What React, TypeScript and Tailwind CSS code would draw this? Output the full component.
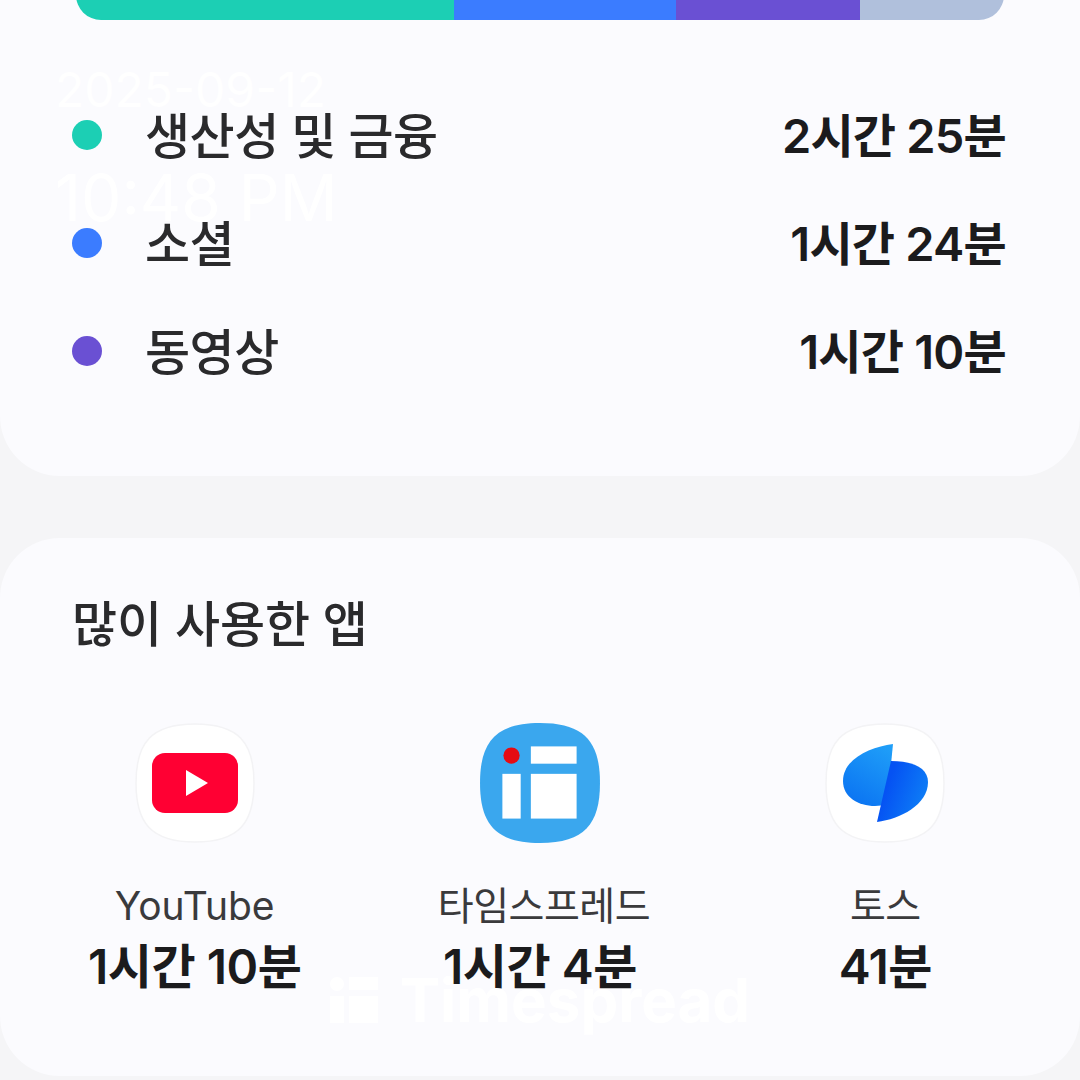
import React from 'react';

const FONT = "font-['Inter','Noto_Sans_CJK_KR',sans-serif]";

const categories = [
    { name: '생산성 및 금융', time: '2시간 25분', dot: 'bg-[#1ccfb4]' },
    { name: '소셜', time: '1시간 24분', dot: 'bg-[#3b7cff]' },
    { name: '동영상', time: '1시간 10분', dot: 'bg-[#6a50d3]' },
];

const squircle = 'M60 1C16 1 1 20 1 60s15 59 59 59 59-19 59-59S104 1 60 1Z';

const YouTubeIcon = () => (
    <svg width="120" height="120" viewBox="0 0 120 120">
        <path d={squircle} fill="#ffffff" stroke="#f3f3f5" strokeWidth="1.5" />
        <rect x="17" y="30" width="86" height="60" rx="13" fill="#ff0033" />
        <path d="M51 47 L73 60 L51 73 Z" fill="#ffffff" />
    </svg>
);

const TimespreadIcon = () => (
    <svg width="122" height="122" viewBox="0 0 120 120">
        <path d={squircle} fill="#3aa7ee" />
        <rect x="51" y="24" width="45" height="17" fill="#ffffff" />
        <rect x="51" y="51" width="45" height="44" fill="#ffffff" />
        <rect x="23" y="51" width="18" height="44" fill="#ffffff" />
        <circle cx="32" cy="33" r="8" fill="#e60b12" />
    </svg>
);

const TossIcon = () => (
    <svg width="120" height="120" viewBox="0 0 120 120">
        <defs>
            <linearGradient id="tossLeft" x1="0.8" y1="0" x2="0.3" y2="1">
                <stop offset="0" stopColor="#1f9ef8" />
                <stop offset="1" stopColor="#0b74f2" />
            </linearGradient>
            <linearGradient id="tossRight" x1="0.2" y1="0.4" x2="0.9" y2="0.7">
                <stop offset="0" stopColor="#0552f3" />
                <stop offset="1" stopColor="#0d7cf6" />
            </linearGradient>
        </defs>
        <path d={squircle} fill="#ffffff" stroke="#f3f3f5" strokeWidth="1.5" />
        <path d="M68 21C45 24 18 36 18 58C18 74 33 83 50 83L62 82Z" fill="url(#tossLeft)" />
        <path d="M52 99C75 96 103 82 103 59C103 46 90 38 66 38Z" fill="url(#tossRight)" />
    </svg>
);

const apps = [
    { name: 'YouTube', time: '1시간 10분', icon: <YouTubeIcon />, nameClass: 'tracking-[0px]' },
    { name: '타임스프레드', time: '1시간 4분', icon: <TimespreadIcon />, nameClass: 'ml-[8px] tracking-[-0.5px]' },
    { name: '토스', time: '41분', icon: <TossIcon />, nameClass: 'tracking-[-0.5px]' },
];

export default function App() {
    return (
        <div className={`relative h-[1080px] w-[1080px] overflow-hidden bg-[#f5f5f7] ${FONT}`}>
            {/* Category card, cut off by the top of the screen */}
            <section className="flow-root h-[476px] rounded-b-[60px] bg-[#fbfbfe] px-[76px]">
                <div className="-mt-[30px] flex h-[50px] overflow-hidden rounded-[34px]">
                    <div className="w-[378px] bg-[#1ccfb4]"></div>
                    <div className="w-[222px] bg-[#3b7cff]"></div>
                    <div className="w-[184px] bg-[#6a50d3]"></div>
                    <div className="w-[144px] bg-[#b0c0dc]"></div>
                </div>

                <div className="-mx-1 mt-[61px] flex flex-col">
                    {categories.map((row) => (
                        <div key={row.name} className="flex h-[108px] items-center pr-[2px]">
                            <span className={`h-[30px] w-[30px] rounded-full ${row.dot}`}></span>
                            <span className="ml-[43px] pt-[3px] text-[49px] font-medium tracking-[-0.5px] text-[#2a2a2c]">
                                {row.name}
                            </span>
                            <span className="ml-auto pt-[2px] text-[47px] font-semibold tracking-[-0.8px] text-[#1b1b1d]">
                                {row.time}
                            </span>
                        </div>
                    ))}
                </div>
            </section>

            {/* Most used apps */}
            <section className="mt-[62px] h-[538px] rounded-[60px] bg-[#fbfbfe]">
                <h2 className="pl-[72px] pt-[56px] text-[49px] font-medium leading-[62px] tracking-[-0.1px] text-[#2a2a2c]">
                    많이 사용한 앱
                </h2>
                <div className="mt-[67px] grid grid-cols-3 px-[22px]">
                    {apps.map((app) => (
                        <div key={app.name} className="flex flex-col items-center">
                            <div className="flex h-[120px] items-center justify-center">{app.icon}</div>
                            <div className={`mt-[38px] text-[39px] leading-[50px] text-[#3a3a3c] ${app.nameClass}`}>
                                {app.name}
                            </div>
                            <div className="mt-[6px] text-[48px] font-semibold leading-[60px] tracking-[-0.5px] text-[#1b1b1d]">
                                {app.time}
                            </div>
                        </div>
                    ))}
                </div>
            </section>

            {/* Watermark and timestamp on top of the screenshot */}
            <div className="absolute left-[55px] top-[58px] text-[48px] leading-[64px] text-white">2025-09-12</div>
            <div className="absolute left-[55px] top-[160px] text-[64px] leading-[76px] text-white">10:48 PM</div>
            <div className="absolute left-[330px] top-[968px] flex items-center gap-[22px] text-[60px] font-bold leading-[64px] text-white">
                <svg width="48" height="46" viewBox="0 0 48 46" fill="#ffffff">
                    <circle cx="7" cy="7" r="7" />
                    <rect x="19" y="0" width="29" height="13" />
                    <rect x="0" y="19" width="14" height="27" />
                    <rect x="19" y="19" width="29" height="27" />
                </svg>
                Timespread
            </div>
        </div>
    );
}
